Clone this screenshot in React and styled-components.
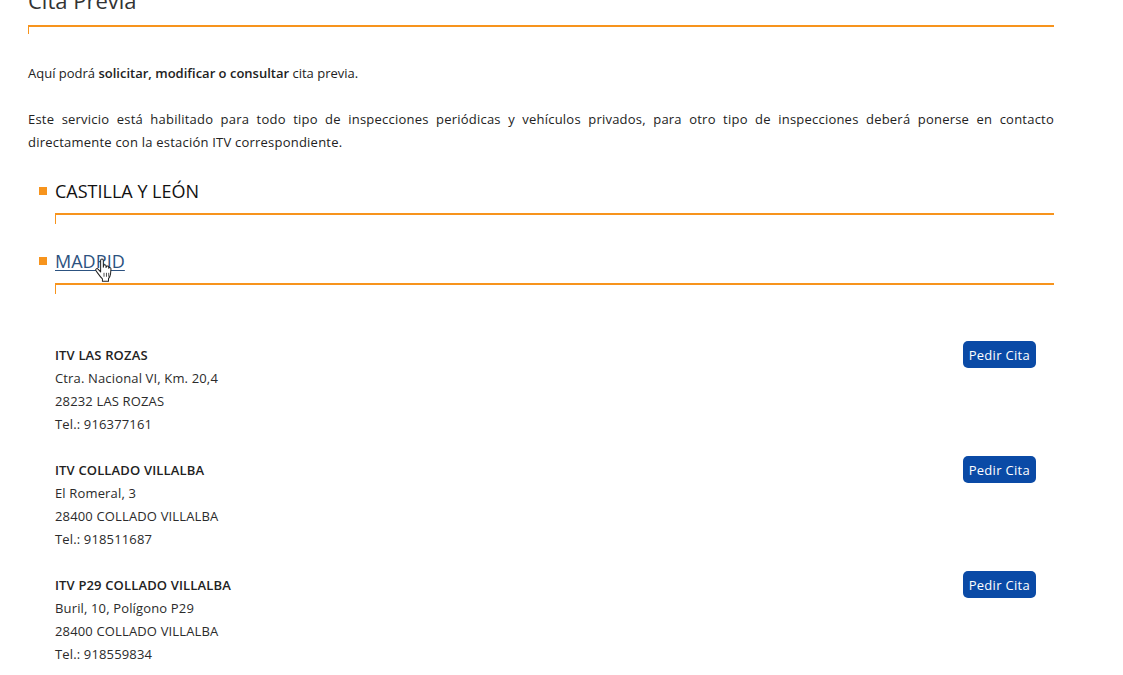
import styled, { createGlobalStyle } from "styled-components";

const stations = [
    {
        name: "ITV LAS ROZAS",
        address: "Ctra. Nacional VI, Km. 20,4",
        city: "28232 LAS ROZAS",
        phone: "Tel.: 916377161",
    },
    {
        name: "ITV COLLADO VILLALBA",
        address: "El Romeral, 3",
        city: "28400 COLLADO VILLALBA",
        phone: "Tel.: 918511687",
    },
    {
        name: "ITV P29 COLLADO VILLALBA",
        address: "Buril, 10, Polígono P29",
        city: "28400 COLLADO VILLALBA",
        phone: "Tel.: 918559834",
    },
];

function HandCursor() {
    return (
        <Cursor width="18" height="24" viewBox="0 0 16 20">
            <path
                d="M5 1.5c0-.8.6-1.3 1.2-1.3s1.2.5 1.2 1.3v6l.2-1.2c.2-.7.8-1 1.3-.9.6.1 1 .6.9 1.3v1l.3-.6c.3-.6.9-.8 1.4-.6.5.2.8.7.7 1.3v.6c.3-.5.8-.7 1.3-.5.5.2.8.7.7 1.3l-.4 4.3c-.2 1.8-.8 3-1.8 4.2v2.2H6.6v-2C5.3 16.6 3.8 14.8 2.4 12.8L.9 10.6c-.4-.6-.3-1.3.2-1.6.5-.4 1.2-.3 1.6.2L5 11.7z"
                fill="#fff"
                stroke="#222"
                strokeWidth="0.9"
                strokeLinejoin="round"
            />
            <path d="M8 12.5v3.5M10.2 12.5v3.5M12.2 12.5v3.5" stroke="#222" strokeWidth="0.7" />
        </Cursor>
    );
}

function App() {
    return (
        <>
            <GlobalStyle />
            <Page>
                <Title>Cita Previa</Title>
                <Rule />

                <Text>
                    Aquí podrá <b>solicitar, modificar o consultar</b> cita previa.
                </Text>
                <Text $spaced>
                    Este servicio está habilitado para todo tipo de inspecciones periódicas y
                    vehículos privados, para otro tipo de inspecciones deberá ponerse en contacto
                    directamente con la estación ITV correspondiente.
                </Text>

                <Region>
                    <RegionTitle>
                        <Bullet />
                        <span>CASTILLA Y LEÓN</span>
                    </RegionTitle>
                    <SubRule />
                </Region>

                <Region>
                    <RegionTitle>
                        <Bullet />
                        <RegionLink href="#">
                            MADRID
                            <HandCursor />
                        </RegionLink>
                    </RegionTitle>
                    <SubRule />
                </Region>

                <StationList>
                    {stations.map((s) => (
                        <Station key={s.name}>
                            <StationInfo>
                                <StationName>{s.name}</StationName>
                                <div>{s.address}</div>
                                <div>{s.city}</div>
                                <div>{s.phone}</div>
                            </StationInfo>
                            <CitaButton type="button">Pedir Cita</CitaButton>
                        </Station>
                    ))}
                </StationList>
            </Page>
        </>
    );
}

const GlobalStyle = createGlobalStyle`
    body {
        margin: 0;
        background: #fff;
        font-family: "Open Sans", "Noto Sans", sans-serif;
        color: #222;
        overflow: hidden;
    }
`;

const Page = styled.div`
    width: 1026px;
    padding-left: 28px;
    font-size: 13px;
    line-height: 23px;

    b {
        font-weight: 600;
    }
`;

const Title = styled.h1`
    margin: -15px 0 0;
    font-size: 22px;
    font-weight: 400;
    line-height: 30px;
    color: #333;
`;

const Rule = styled.div`
    margin-top: 10px;
    height: 7px;
    border-top: 2px solid #f7941d;
    border-left: 1px solid #f7941d;
    margin-bottom: 28px;
`;

const Text = styled.p`
    margin: 0 0 ${(p) => (p.$spaced ? "24px" : "23px")};
    text-align: justify;
    letter-spacing: ${(p) => (p.$spaced ? "0.22px" : "0")};
`;

const Region = styled.div`
    padding-left: 11px;
`;

const RegionTitle = styled.div`
    display: flex;
    align-items: center;
    gap: 8px;
    font-size: 18px;
    line-height: 26px;
    color: #111;
`;

const Bullet = styled.span`
    width: 8px;
    height: 8px;
    background: #f7941d;
    flex-shrink: 0;
`;

const RegionLink = styled.a`
    position: relative;
    color: #2c5280;
    text-decoration: underline;
    text-decoration-thickness: 1px;
    text-underline-offset: 2px;
`;

const Cursor = styled.svg`
    position: absolute;
    left: 40px;
    top: 10px;
`;

const SubRule = styled.div`
    margin: 9px 0 0 16px;
    height: 9px;
    border-top: 2px solid #f7941d;
    border-left: 1px solid #f7941d;
    margin-bottom: 24px;
`;

const StationList = styled.div`
    padding: 26px 18px 0 27px;
    display: flex;
    flex-direction: column;
    gap: 23px;
    letter-spacing: 0.15px;
`;

const Station = styled.div`
    display: flex;
    justify-content: space-between;
    align-items: flex-start;
`;

const StationInfo = styled.div`
    color: #2b2b2b;
`;

const StationName = styled.div`
    font-weight: 600;
    color: #222;
`;

const CitaButton = styled.button`
    margin-top: -3px;
    height: 27px;
    padding: 0 6px;
    border: none;
    border-radius: 5px;
    background: #0a4aa6;
    color: #fff;
    font-family: "Open Sans", "Noto Sans", sans-serif;
    font-size: 13px;
    letter-spacing: 0.3px;
    cursor: pointer;
`;

export default App;
